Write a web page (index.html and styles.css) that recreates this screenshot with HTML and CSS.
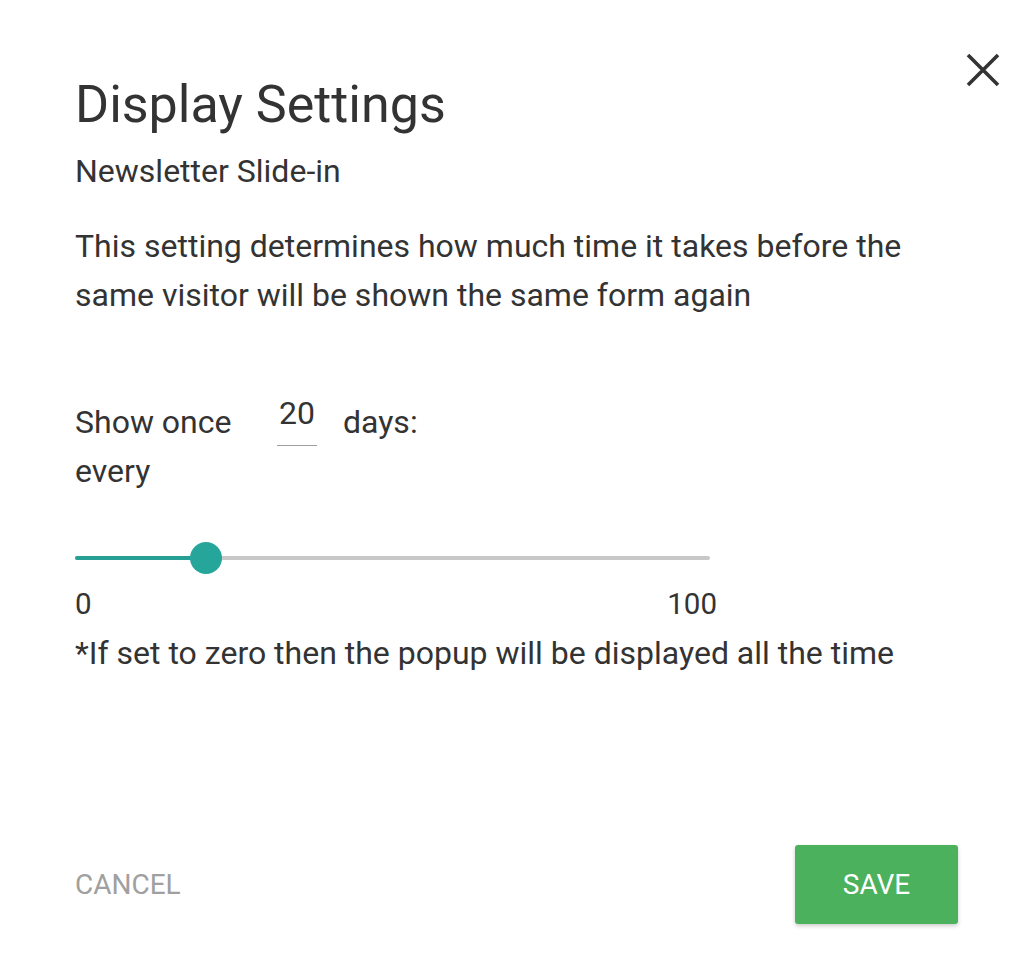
FILE: index.html
```html
<!DOCTYPE html>
<html lang="en">
<head>
    <meta charset="UTF-8">
    <meta name="viewport" content="width=device-width, initial-scale=1.0">
    <title>Display Settings</title>
    <link rel="stylesheet" href="styles.css">
</head>
<body>

    <div class="modal">
        <button class="close-btn" aria-label="Close">
            <svg width="36" height="36" viewBox="0 0 36 36">
                <path d="M3 3 L33 33 M33 3 L3 33" stroke="#333" stroke-width="3.6" stroke-linecap="butt"/>
            </svg>
        </button>

        <h1 class="title">Display Settings</h1>
        <div class="subtitle">Newsletter Slide-in</div>

        <p class="description">This setting determines how much time it takes before the same visitor will be shown the same form again</p>

        <div class="days-row">
            <label class="days-label" for="days">Show once every</label>
            <input class="days-input" type="text" id="days" value="20">
            <span class="days-unit">days:</span>
        </div>

        <div class="slider">
            <div class="track">
                <div class="track-fill" style="width: 20.6%"></div>
                <div class="thumb" style="left: 20.6%"></div>
            </div>
            <div class="slider-labels">
                <span>0</span>
                <span>100</span>
            </div>
        </div>

        <p class="note">*If set to zero then the popup will be displayed all the time</p>

        <div class="actions">
            <button class="btn btn-cancel">Cancel</button>
            <button class="btn btn-save">Save</button>
        </div>
    </div>

</body>
</html>
```
FILE: styles.css
```css
body {
    margin: 0;
    background: #fff;
    font-family: Roboto, "Noto Sans", Arial, sans-serif;
    color: #333;
}
.modal {
    position: relative;
    width: 1020px;
    height: 960px;
    box-sizing: border-box;
    padding: 75px 62px 0 75px;
}
.close-btn {
    position: absolute;
    top: 52px;
    right: 19px;
    padding: 0;
    border: none;
    background: none;
    cursor: pointer;
}
.close-btn svg {
    display: block;
}
.title {
    margin: 0;
    font-size: 52px;
    font-weight: 400;
    line-height: 60px;
}
.subtitle {
    margin-top: 16px;
    font-size: 32px;
    line-height: 40px;
}
.description {
    margin: 31px 0 0;
    font-size: 32px;
    line-height: 49px;
    max-width: 860px;
}
.days-row {
    display: flex;
    align-items: flex-start;
    margin-top: 78px;
    font-size: 32px;
    line-height: 49px;
}
.days-label {
    width: 170px;
}
.days-input {
    width: 40px;
    height: 40px;
    margin: -5px 0 0 32px;
    padding: 0 0 12px;
    border: none;
    border-bottom: 1px solid #9e9e9e;
    outline: none;
    font: inherit;
    color: #333;
    text-align: center;
    line-height: 40px;
}
.days-unit {
    margin-left: 26px;
}
.slider {
    margin-top: 60px;
    width: 635px;
}
.track {
    position: relative;
    height: 4px;
    background: #c8c8c8;
    border-radius: 2px;
}
.track-fill {
    height: 4px;
    background: #26a095;
    border-radius: 2px;
}
.thumb {
    position: absolute;
    top: -14px;
    width: 32px;
    height: 32px;
    margin-left: -16px;
    border-radius: 50%;
    background: #26a69a;
}
.slider-labels {
    display: flex;
    justify-content: space-between;
    width: 642px;
    margin-top: 27px;
    font-size: 29.5px;
    line-height: 34px;
}
.note {
    margin: 12px 0 0;
    font-size: 32px;
    line-height: 40px;
}
.actions {
    position: absolute;
    left: 75px;
    right: 62px;
    top: 845px;
    display: flex;
    justify-content: space-between;
    align-items: center;
}
.btn {
    border: none;
    font-family: inherit;
    font-size: 28px;
    text-transform: uppercase;
    cursor: pointer;
}
.btn-cancel {
    padding: 0;
    background: none;
    color: #a0a0a0;
}
.btn-save {
    width: 163px;
    height: 79px;
    background: #4bb15d;
    color: #fff;
    border-radius: 3px;
    box-shadow: 0 2px 4px rgba(0, 0, 0, 0.2);
}
```
